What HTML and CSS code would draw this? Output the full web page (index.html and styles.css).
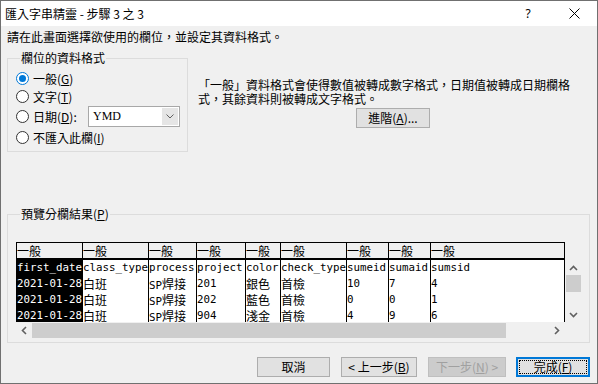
FILE: index.html
```html
<!DOCTYPE html>
<html lang="zh-Hant">
<head>
<meta charset="utf-8">
<title>匯入字串精靈</title>
<link rel="stylesheet" href="styles.css">
</head>
<body>
<div class="window">
  <div class="titlebar">
    <div class="title">匯入字串精靈 - 步驟 3 之 3</div>
    <div class="cap-btn help">?</div>
    <div class="cap-btn close"><svg width="11" height="11" viewBox="0 0 11 11"><path d="M0.5 0.5 L10.5 10.5 M10.5 0.5 L0.5 10.5" stroke="#000" stroke-width="1" fill="none"/></svg></div>
  </div>
  <div class="body">
    <p class="intro">請在此畫面選擇欲使用的欄位，並設定其資料格式。</p>
    <div class="top-row">
      <fieldset class="group fmt">
        <legend>欄位的資料格式</legend>
        <div class="opt r1"><span class="radio on"></span><span>一般(<u>G</u>)</span></div>
        <div class="opt r2"><span class="radio"></span><span>文字(<u>T</u>)</span></div>
        <div class="opt r3"><span class="radio"></span><span class="date-label">日期(<u>D</u>):</span>
          <div class="combo"><span class="combo-text">YMD</span><span class="combo-btn"><svg width="8" height="5" viewBox="0 0 8 5"><path d="M0.5 0.5 L4 4 L7.5 0.5" stroke="#606060" stroke-width="1" fill="none"/></svg></span></div>
        </div>
        <div class="opt r4"><span class="radio"></span><span>不匯入此欄(<u>I</u>)</span></div>
      </fieldset>
      <div class="desc">
        <p>「一般」資料格式會使得數值被轉成數字格式，日期值被轉成日期欄格式，其餘資料則被轉成文字格式。</p>
        <button class="btn adv">進階(<u>A</u>)...</button>
      </div>
    </div>
    <fieldset class="group preview">
      <legend>預覽分欄結果(<u>P</u>)</legend>
      <div class="pv">
        <div class="sheet">
          <div class="h first">一般</div><div class="h">一般</div><div class="h">一般</div><div class="h">一般</div><div class="h">一般</div><div class="h">一般</div><div class="h">一般</div><div class="h">一般</div><div class="h">一般</div>

          <div class="c sel">first_date</div><div class="c">class_type</div><div class="c">process</div><div class="c">project</div><div class="c">color</div><div class="c">check_type</div><div class="c">sumeid</div><div class="c">sumaid</div><div class="c">sumsid</div>

          <div class="c sel">2021-01-28</div><div class="c"><span class="cj">白班</span></div><div class="c">SP<span class="cj">焊接</span></div><div class="c">201</div><div class="c"><span class="cj">銀色</span></div><div class="c"><span class="cj">首檢</span></div><div class="c">10</div><div class="c">7</div><div class="c">4</div>

          <div class="c sel">2021-01-28</div><div class="c"><span class="cj">白班</span></div><div class="c">SP<span class="cj">焊接</span></div><div class="c">202</div><div class="c"><span class="cj">藍色</span></div><div class="c"><span class="cj">首檢</span></div><div class="c">0</div><div class="c">0</div><div class="c">1</div>

          <div class="c sel">2021-01-28</div><div class="c"><span class="cj">白班</span></div><div class="c">SP<span class="cj">焊接</span></div><div class="c">904</div><div class="c"><span class="cj">淺金</span></div><div class="c"><span class="cj">首檢</span></div><div class="c">4</div><div class="c">9</div><div class="c">6</div>
        </div>
        <div class="vs">
          <div class="arr"><svg width="9" height="6" viewBox="0 0 9 6"><path d="M1 5 L4.5 1.5 L8 5" fill="none" stroke="#606060" stroke-width="1.6"/></svg></div>
          <div class="thumb"></div>
          <div class="track"></div>
          <div class="arr"><svg width="9" height="6" viewBox="0 0 9 6"><path d="M1 1 L4.5 4.5 L8 1" fill="none" stroke="#606060" stroke-width="1.6"/></svg></div>
        </div>
        <div class="hs">
          <div class="arr"><svg width="6" height="9" viewBox="0 0 6 9"><path d="M5 1 L1.5 4.5 L5 8" fill="none" stroke="#606060" stroke-width="1.6"/></svg></div>
          <div class="thumb"></div>
          <div class="track"></div>
          <div class="arr"><svg width="6" height="9" viewBox="0 0 6 9"><path d="M1 1 L4.5 4.5 L1 8" fill="none" stroke="#606060" stroke-width="1.6"/></svg></div>
        </div>
      </div>
    </fieldset>
    <div class="buttons">
      <button class="btn b-cancel">取消</button>
      <button class="btn b-back">&lt; 上一步(<u>B</u>)</button>
      <button class="btn b-next" disabled>下一步(<u>N</u>) &gt;</button>
      <button class="btn b-finish">完成(<u>F</u>)</button>
    </div>
  </div>
</div>
</body>
</html>
```

FILE: styles.css
```css
* { box-sizing: border-box; }
html, body { margin: 0; padding: 0; }
body {
  font-family: "Noto Sans CJK TC", "Noto Sans", sans-serif;
  font-size: 12px;
  color: #000;
  background: #fff;
}
.window {
  width: 598px;
  height: 384px;
  border: 1px solid #707070;
  background: #f0f0f0;
  display: flex;
  flex-direction: column;
  overflow: hidden;
}
.titlebar {
  height: 25px;
  flex: none;
  background: #fff;
  display: flex;
  align-items: center;
}
.title { flex: 1; padding-left: 4px; line-height: 16px; }
.cap-btn {
  width: 46px;
  height: 25px;
  display: flex;
  align-items: center;
  justify-content: center;
}
.help { font-family: "Noto Sans", sans-serif; font-size: 12px; }
.body {
  flex: 1;
  padding: 0 7px 0 6px;
  display: flex;
  flex-direction: column;
}
.intro { margin: 3px 0 0; line-height: 16px; }
.top-row { display: flex; align-items: flex-start; margin-top: 5px; }
fieldset.group {
  border: 1px solid #dcdcdc;
  margin: 0;
  min-width: 0;
}
.group legend { padding: 0 1px; margin-left: 4px; line-height: 16px; }
fieldset.fmt { width: 181px; padding: 3px 0 4px 8px; }
.opt { display: flex; align-items: center; }
.r1, .r2 { height: 18px; }
.r3 { height: 22px; }
.r4 { height: 20px; }
.radio {
  width: 13px;
  height: 13px;
  flex: none;
  border: 1px solid #333;
  border-radius: 50%;
  background: #fff;
  margin-right: 4px;
  display: flex;
  align-items: center;
  justify-content: center;
}
.radio.on { border-color: #0078d7; }
.radio.on::after {
  content: "";
  width: 7px;
  height: 7px;
  border-radius: 50%;
  background: #0078d7;
}
.date-label { width: 55px; flex: none; }
.combo {
  width: 92px;
  height: 21px;
  border: 1px solid #a8a8a8;
  padding: 1px;
  background: #fff;
  display: flex;
}
.combo-text {
  flex: 1;
  font-family: "Liberation Serif", serif;
  font-size: 12px;
  line-height: 17px;
  padding-left: 3px;
}
.combo-btn {
  width: 16px;
  background: #e5e5e5;
  display: flex;
  align-items: center;
  justify-content: center;
}
.desc {
  width: 390px;
  margin-left: 10px;
  padding-top: 28px;
  display: flex;
  flex-direction: column;
  align-items: center;
}
.desc p { margin: 0; line-height: 14px; align-self: stretch; }
.btn {
  font: inherit;
  color: #000;
  height: 20px;
  padding: 0;
  border: 1px solid #adadad;
  background: #e1e1e1;
  line-height: 18px;
  flex: none;
}
.adv { width: 74px; margin-top: 2px; }
fieldset.preview { margin-top: 54px; padding: 20px 0 3px 8px; }
.pv {
  display: grid;
  grid-template-columns: 549px 17px;
  grid-template-rows: 18px 62px 17px;
}
.sheet {
  grid-row: 1 / 3;
  grid-column: 1;
  border: 1px solid #000;
  border-bottom: 0;
  background: #fff;
  overflow: hidden;
  display: grid;
  grid-template-columns: 65px 66px 48px 49px 35px 66px 42px 42px 1fr;
  grid-template-rows: 17px repeat(4, 16px);
}
.h {
  background: #f0f0f0;
  border-left: 1px solid #000;
  border-bottom: 2px solid #000;
  line-height: 15px;
  white-space: nowrap;
  overflow: hidden;
}
.h.first { border-left: 0; }
.c {
  border-left: 1px solid #000;
  font-family: "DejaVu Sans Mono", "Noto Sans CJK TC", monospace;
  font-size: 10.8px;
  line-height: 16px;
  white-space: nowrap;
  overflow: hidden;
}
.c.sel { background: #000; color: #fff; border-left: 0; }
.cj { font-family: "Noto Sans CJK TC", sans-serif; font-size: 12px; }
.vs {
  grid-row: 2;
  grid-column: 2;
  display: flex;
  flex-direction: column;
  align-items: center;
}
.vs .arr { height: 15px; width: 17px; display: flex; align-items: center; justify-content: center; }
.vs .thumb { width: 15px; height: 17px; background: #cdcdcd; }
.vs .track { flex: 1; }
.hs {
  grid-row: 3;
  grid-column: 1;
  display: flex;
  align-items: center;
}
.hs .arr { width: 16px; height: 17px; display: flex; align-items: center; justify-content: center; }
.hs .thumb { width: 474px; height: 15px; background: #cdcdcd; }
.hs .track { flex: 1; }
.buttons {
  display: flex;
  justify-content: flex-end;
  margin-top: 14px;
}
.b-cancel { width: 73px; }
.b-back { width: 76px; margin-left: 11px; }
.b-next { width: 78px; margin-left: 11px; background: #cccccc; border-color: #bfbfbf; color: #a0a0a0; }
.b-finish {
  width: 74px;
  margin-left: 10px;
  border: 2px solid #0078d7;
  line-height: 16px;
  outline: 1px dotted #000;
  outline-offset: -4px;
}
```
